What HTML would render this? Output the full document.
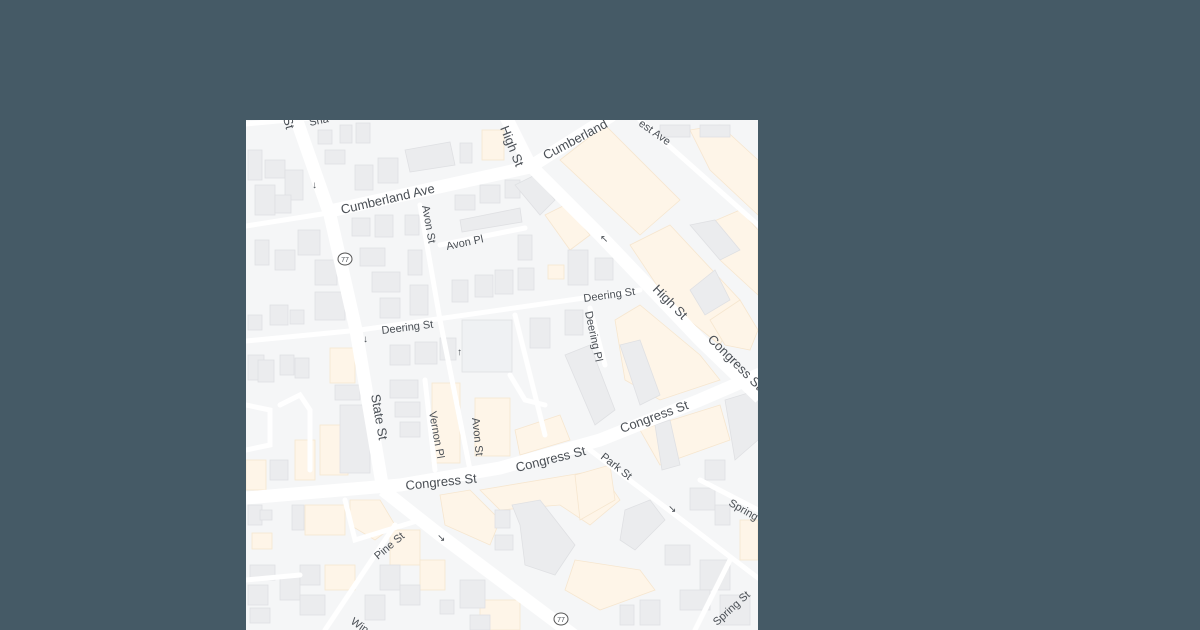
<!DOCTYPE html>
<html><head><meta charset="utf-8"><style>
html,body{margin:0;padding:0;width:1200px;height:630px;overflow:hidden;background:#455a66;}
svg{position:absolute;left:246px;top:120px;}
text{font-family:"Liberation Sans",sans-serif;fill:#4a4f55;}
</style></head><body>
<svg width="512" height="510" viewBox="246 120 512 510">
<rect x="246" y="120" width="512" height="510" fill="#f5f6f7"/>
<g fill="#fef5e8" stroke="#f6e6cf" stroke-width="0.8">
<polygon points="560,160 605,125 680,200 640,235"/>
<polygon points="630,245 670,225 740,300 720,345 670,305"/>
<polygon points="690,130 720,125 758,160 758,215 710,170"/>
<polygon points="705,225 740,210 758,230 758,295 720,260"/>
<polygon points="710,320 740,300 758,330 750,350 725,345"/>
<polygon points="615,320 640,305 700,355 720,380 660,400 625,380"/>
<polygon points="545,215 565,205 590,235 570,250"/>
<rect x="548" y="265" width="16" height="14"/>
<rect x="482" y="130" width="22" height="30"/>
<rect x="432" y="383" width="28" height="80"/>
<rect x="475" y="398" width="35" height="58"/>
<polygon points="515,430 560,415 570,440 520,455"/>
<rect x="320" y="425" width="28" height="50"/>
<rect x="295" y="440" width="20" height="40"/>
<rect x="246" y="460" width="20" height="30"/>
<rect x="330" y="348" width="25" height="35"/>
<polygon points="440,495 470,490 500,520 490,545 445,525"/>
<polygon points="480,490 600,470 620,500 590,525 560,505 500,510"/>
<polygon points="575,475 610,465 615,500 580,520"/>
<polygon points="640,430 720,405 730,440 660,465"/>
<rect x="305" y="505" width="40" height="30"/>
<polygon points="350,500 380,500 395,525 375,540 350,525"/>
<rect x="390" y="530" width="30" height="35"/>
<rect x="420" y="560" width="25" height="30"/>
<rect x="252" y="533" width="20" height="16"/>
<rect x="325" y="565" width="30" height="25"/>
<polygon points="575,560 640,570 655,590 600,610 565,590"/>
<rect x="480" y="600" width="40" height="30"/>
<rect x="740" y="520" width="18" height="40"/>
</g>
<g fill="#ebecee" stroke="#dfe0e3" stroke-width="0.8">
<rect x="318" y="130" width="14" height="14"/><rect x="340" y="125" width="12" height="18"/><rect x="356" y="123" width="14" height="20"/>
<rect x="325" y="150" width="20" height="14"/><rect x="355" y="165" width="18" height="25"/><rect x="378" y="158" width="20" height="25"/>
<polygon points="405,150 450,142 455,165 410,172"/><rect x="460" y="143" width="12" height="20"/>
<rect x="248" y="150" width="14" height="30"/><rect x="265" y="160" width="20" height="18"/><rect x="285" y="170" width="18" height="30"/>
<rect x="255" y="185" width="20" height="30"/><rect x="275" y="195" width="16" height="18"/>
<rect x="255" y="240" width="14" height="25"/><rect x="275" y="250" width="20" height="20"/><rect x="298" y="230" width="22" height="25"/>
<rect x="315" y="260" width="22" height="25"/><rect x="315" y="292" width="30" height="28"/><rect x="270" y="305" width="18" height="20"/><rect x="290" y="310" width="14" height="14"/><rect x="248" y="315" width="14" height="15"/>
<rect x="352" y="218" width="18" height="18"/><rect x="375" y="215" width="18" height="22"/><rect x="405" y="215" width="14" height="20"/>
<rect x="360" y="248" width="25" height="18"/><rect x="372" y="272" width="28" height="20"/><rect x="380" y="298" width="20" height="20"/>
<rect x="408" y="250" width="14" height="25"/><rect x="410" y="285" width="18" height="30"/>
<rect x="455" y="195" width="20" height="15"/><rect x="480" y="185" width="20" height="18"/><rect x="505" y="180" width="15" height="18"/>
<polygon points="460,220 520,208 522,222 462,232"/><rect x="518" y="235" width="14" height="25"/>
<rect x="452" y="280" width="16" height="22"/><rect x="475" y="275" width="18" height="22"/><rect x="495" y="270" width="18" height="24"/><rect x="518" y="268" width="16" height="22"/>
<rect x="568" y="250" width="20" height="35"/><rect x="595" y="258" width="18" height="22"/>
<polygon points="515,185 535,175 555,200 540,215"/>
<rect x="462" y="320" width="50" height="52" fill="#eff1f3"/>
<rect x="530" y="318" width="20" height="30"/><rect x="565" y="310" width="18" height="25"/>
<polygon points="565,355 590,345 615,410 595,425"/>
<polygon points="620,345 640,340 660,395 640,405"/>
<rect x="390" y="345" width="20" height="20"/><rect x="415" y="342" width="22" height="22"/><rect x="440" y="338" width="16" height="22"/>
<rect x="390" y="380" width="28" height="18"/><rect x="395" y="402" width="25" height="15"/><rect x="400" y="422" width="20" height="15"/>
<rect x="248" y="355" width="16" height="25"/><rect x="258" y="360" width="16" height="22"/><rect x="280" y="355" width="14" height="20"/><rect x="295" y="358" width="14" height="20"/>
<rect x="335" y="385" width="25" height="15"/><rect x="340" y="405" width="30" height="68"/><rect x="270" y="460" width="18" height="20"/>
<polygon points="690,225 715,220 740,250 720,260"/><polygon points="690,290 715,270 730,300 705,315"/>
<polygon points="725,400 758,390 758,440 735,460"/><rect x="705" y="460" width="20" height="20"/>
<rect x="690" y="488" width="25" height="22"/><rect x="715" y="505" width="15" height="20"/>
<polygon points="655,425 670,420 680,465 662,470"/>
<polygon points="625,510 650,500 665,520 635,550 620,540"/>
<polygon points="512,505 540,500 575,545 555,575 525,565 520,525"/>
<rect x="495" y="510" width="15" height="18"/><rect x="495" y="535" width="18" height="15"/>
<rect x="248" y="505" width="14" height="20"/><rect x="260" y="510" width="12" height="10"/><rect x="292" y="505" width="12" height="25"/>
<rect x="250" y="565" width="25" height="15"/><rect x="248" y="585" width="20" height="20"/><rect x="250" y="608" width="20" height="15"/>
<rect x="280" y="575" width="20" height="25"/><rect x="300" y="565" width="20" height="20"/><rect x="300" y="595" width="25" height="20"/>
<rect x="380" y="565" width="20" height="25"/><rect x="400" y="585" width="20" height="20"/><rect x="365" y="595" width="20" height="25"/>
<rect x="460" y="580" width="25" height="28"/><rect x="440" y="600" width="14" height="14"/><rect x="470" y="615" width="20" height="15"/>
<rect x="665" y="545" width="25" height="20"/><rect x="700" y="560" width="30" height="30"/><rect x="680" y="590" width="30" height="20"/>
<rect x="720" y="595" width="30" height="30"/><rect x="640" y="600" width="20" height="25"/><rect x="620" y="605" width="14" height="20"/>
<rect x="700" y="125" width="30" height="12"/><rect x="660" y="125" width="30" height="12"/>
</g>
<g fill="none" stroke="#ffffff" stroke-width="5" stroke-linecap="round">
<polyline points="246,226 322,214"/>
<polyline points="246,124 310,118"/>
<polyline points="420,205 440,320 470,470"/>
<polyline points="440,245 525,228"/>
<polyline points="246,341 360,330 640,290"/>
<polyline points="590,308 605,365"/>
<polyline points="515,315 545,435"/>
<polyline points="425,380 435,470"/>
<polyline points="640,120 758,225"/>
<polyline points="590,450 758,578"/>
<polyline points="345,500 355,540 420,520"/>
<polyline points="395,525 325,630"/>
<polyline points="700,480 758,510"/>
<polyline points="730,560 695,630"/>
<polyline points="246,580 300,575"/>
<polyline points="510,375 525,400 545,405"/>
<polyline points="280,405 300,395 310,410 310,470"/>
<polyline points="246,405 270,410 270,445 246,450"/>
</g>
<g fill="none" stroke="#ffffff" stroke-width="13" stroke-linecap="butt">
<polyline points="296,118 330,215 356,330 383,490"/>
<polyline points="383,490 440,535 580,640"/>
<polyline points="330,211 530,167 612,115"/>
<polyline points="505,115 530,165 600,235 700,340 760,398"/>
<polyline points="246,498 400,485 500,468 600,440 700,400 760,374"/>
</g>
<g fill="#9aa0ab" font-size="10">
<text x="312" y="188">↓</text><text x="363" y="342">↓</text><text x="457" y="355">↑</text>
<text x="600" y="242">↖</text><text x="437" y="541">↘</text><text x="668" y="512">↘</text>
</g>
<g fill="#fff" stroke="#555" stroke-width="1">
<ellipse cx="345" cy="259" rx="7" ry="6"/><ellipse cx="561" cy="619" rx="7" ry="6"/>
</g>
<g font-size="7" text-anchor="middle"><text x="345" y="262">77</text><text x="561" y="622">77</text></g>
<g font-size="13">
<text transform="translate(342,214) rotate(-13)">Cumberland Ave</text>
<text transform="translate(500,128) rotate(68)">High St</text>
<text transform="translate(546,160) rotate(-28)">Cumberland</text>
<text transform="translate(652,290) rotate(45)">High St</text>
<text transform="translate(707,340) rotate(45)">Congress St</text>
<text transform="translate(371,395) rotate(80)">State St</text>
<text transform="translate(406,490) rotate(-6)">Congress St</text>
<text transform="translate(517,472) rotate(-14)">Congress St</text>
<text transform="translate(622,433) rotate(-20)">Congress St</text>
<text transform="translate(283,118) rotate(75)">St</text>
</g>
<g font-size="11">
<text transform="translate(422,206) rotate(80)">Avon St</text>
<text transform="translate(447,250) rotate(-12)">Avon Pl</text>
<text transform="translate(382,334) rotate(-7)">Deering St</text>
<text transform="translate(584,302) rotate(-8)">Deering St</text>
<text transform="translate(585,312) rotate(78)">Deering Pl</text>
<text transform="translate(429,412) rotate(80)">Vernon Pl</text>
<text transform="translate(472,418) rotate(84)">Avon St</text>
<text transform="translate(600,458) rotate(38)">Park St</text>
<text transform="translate(378,560) rotate(-40)">Pine St</text>
<text transform="translate(728,505) rotate(30)">Spring</text>
<text transform="translate(717,626) rotate(-42)">Spring St</text>
<text transform="translate(638,125) rotate(35)">est Ave</text>
<text transform="translate(350,623) rotate(35)">Win</text>
<text transform="translate(310,126) rotate(-12)">Sha</text>
</g>
</svg>
</body></html>
